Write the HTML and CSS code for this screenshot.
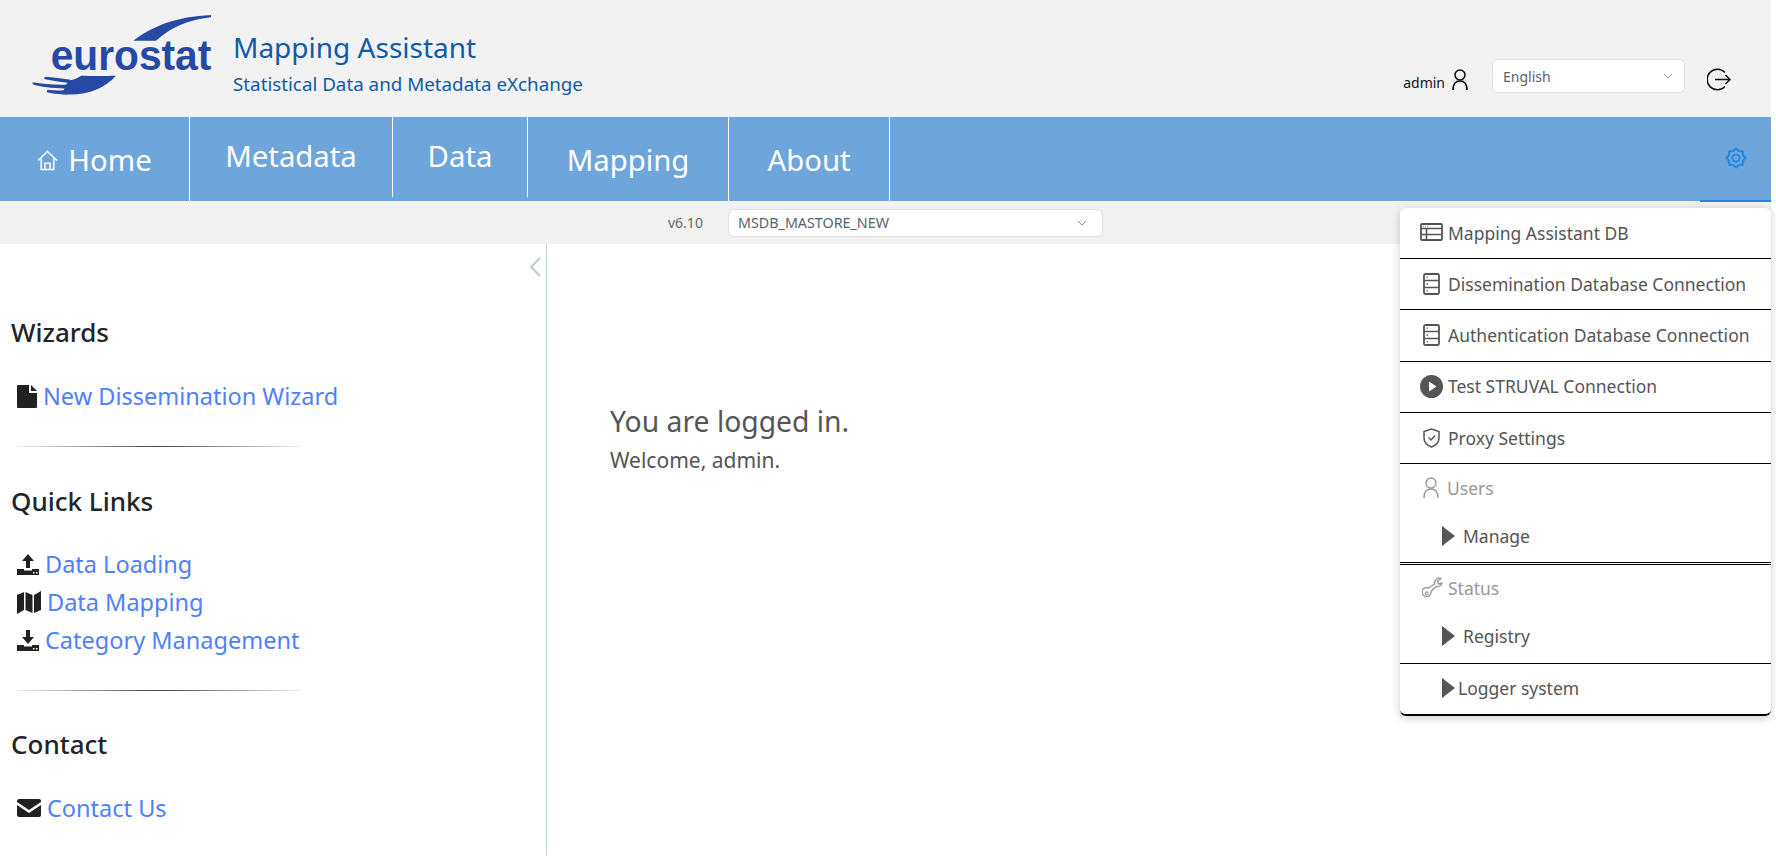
FILE: index.html
```html
<!DOCTYPE html>
<html lang="en">
<head>
<meta charset="utf-8">
<title>Mapping Assistant</title>
<link rel="stylesheet" href="styles.css">
</head>
<body>
<div class="page">
  <header class="header">
    <div class="brand">
      <svg class="logo" viewBox="0 0 630 300" width="210" height="100" aria-label="eurostat">
        <path class="logo-shape" d="M340 107C400 62 470 35 573 30L573 37C500 45 450 70 408 107Z"/>
        <text class="logo-text" x="92" y="195" textLength="482" lengthAdjust="spacingAndGlyphs">eurostat</text>
        <path class="logo-shape" d="M288 212C255 213 215 213 183 212C172 220 160 226 145 226L125 268C205 274 255 248 288 212Z"/>
        <path class="logo-shape" d="M75 215C100 216 125 220 150 224L150 234C125 232 100 228 72 222Z"/>
        <path class="logo-shape" d="M38 232C70 238 110 241 150 239L150 250C110 252 65 247 38 238Z"/>
        <path class="logo-shape" d="M82 254C105 257 130 257 150 254L150 266C130 269 105 268 80 262Z"/>
      </svg>
      <div class="titles">
        <div class="app-title">Mapping Assistant</div>
        <div class="app-subtitle">Statistical Data and Metadata eXchange</div>
      </div>
    </div>
    <div class="user-tools">
      <span class="user-name">admin</span>
      <svg class="user-icon" viewBox="0 0 16 21" width="16" height="21"><circle cx="8" cy="6" r="5" fill="none" stroke="#111" stroke-width="1.6"/><path d="M1 21C1 15 4 12 8 12S15 15 15 21" fill="none" stroke="#111" stroke-width="1.6"/></svg>
      <div class="select select-lang"><span>English</span><svg class="chev" viewBox="0 0 10 6" width="10" height="6"><path d="M1 1L5 5L9 1" fill="none" stroke="#8a9099" stroke-width="1"/></svg></div>
      <svg class="logout-icon" viewBox="0 0 24 23" width="24" height="23"><path d="M18 4.500A10.300 10.300 0 1 0 18 18.500" fill="none" stroke="#111" stroke-width="1.500"/><path d="M8 11.500H23M18.500 7L23 11.500L18.500 16" fill="none" stroke="#111" stroke-width="1.500"/></svg>
    </div>
  </header>

  <nav class="nav">
    <a class="nav-item nav-home"><svg class="home-icon" viewBox="0 0 20 20" width="21" height="21"><path d="M1 10L10 1.500L19 10M4 8V18.500H16V8M7.500 18.500V12.500H12.500V18.500" fill="none" stroke="#fff" stroke-width="1.400"/></svg><span>Home</span></a>
    <a class="nav-item nav-metadata nav-short">Metadata</a>
    <a class="nav-item nav-data nav-short">Data</a>
    <a class="nav-item nav-mapping">Mapping</a>
    <a class="nav-item nav-about">About</a>
    <a class="nav-settings"><svg viewBox="0 0 24 24" width="24" height="24"><path d="M21.500 12L18.930 14.870L18.720 18.720L14.870 18.930L12 21.500L9.130 18.930L5.280 18.720L5.070 14.870L2.500 12L5.070 9.130L5.280 5.280L9.130 5.070L12 2.500L14.870 5.070L18.720 5.280L18.930 9.130Z" fill="none" stroke="#1e88e5" stroke-width="1.900" stroke-linejoin="round"/><circle cx="12" cy="12" r="3.600" fill="none" stroke="#1e88e5" stroke-width="1.900"/></svg></a>
  </nav>

  <div class="subbar">
    <span class="version">v6.10</span>
    <div class="select select-db"><span>MSDB_MASTORE_NEW</span><svg class="chev" viewBox="0 0 10 6" width="10" height="6"><path d="M1 1L5 5L9 1" fill="none" stroke="#8a9099" stroke-width="1"/></svg></div>
  </div>

  <div class="content">
    <aside class="sidebar">
      <svg class="collapse" viewBox="0 0 12 20" width="12" height="20"><path d="M11 1L2 10L11 19" fill="none" stroke="#bccbd5" stroke-width="1.900"/></svg>
      <h3 class="side-title side-title-first">Wizards</h3>
      <ul class="side-links">
        <li><svg class="side-icon" viewBox="0 0 20 23" width="20" height="23"><path d="M1 0H12V8H20V22A1 1 0 0 1 19 23H1A1 1 0 0 1 0 22V1A1 1 0 0 1 1 0Z"/><path d="M14 0L20 6H14Z"/></svg><a>New Dissemination Wizard</a></li>
      </ul>
      <div class="side-rule"></div>
      <h3 class="side-title">Quick Links</h3>
      <ul class="side-links side-links-tight">
        <li><svg class="side-icon" viewBox="0 0 22 21" width="22" height="21"><path d="M11 0L17 7H13V14H9V7H5Z"/><path d="M0 15H7V16.500H15V15H22V21H0ZM16 18V19.500H17.500V18ZM19 18V19.500H20.500V18Z" fill-rule="evenodd"/></svg><a>Data Loading</a></li>
        <li><svg class="side-icon" viewBox="0 0 24 23" width="24" height="23"><path d="M0 4L7 1V19L0 23ZM8.500 1L15.500 4V22L8.500 19ZM17 4L24 0V19L17 22Z"/></svg><a>Data Mapping</a></li>
        <li><svg class="side-icon" viewBox="0 0 22 21" width="22" height="21"><path d="M9 0H13V7H17L11 14L5 7H9Z"/><path d="M0 15H7V16.500H15V15H22V21H0ZM16 18V19.500H17.500V18ZM19 18V19.500H20.500V18Z" fill-rule="evenodd"/></svg><a>Category Management</a></li>
      </ul>
      <div class="side-rule"></div>
      <h3 class="side-title side-title-last">Contact</h3>
      <ul class="side-links">
        <li><svg class="side-icon" viewBox="0 0 24 18" width="24" height="18"><path d="M2 0H22A2 2 0 0 1 24 2V3L12 11L0 3V2A2 2 0 0 1 2 0Z"/><path d="M0 6L12 14L24 6V16A2 2 0 0 1 22 18H2A2 2 0 0 1 0 16Z"/></svg><a>Contact Us</a></li>
      </ul>
    </aside>
    <main class="main">
      <div class="logged">You are logged in.</div>
      <div class="welcome">Welcome, admin.</div>
    </main>
  </div>

  <div class="menu">
    <div class="menu-row">
      <svg class="menu-icon icon-up" viewBox="0 0 23 18" width="23" height="18"><rect x="1" y="1" width="21" height="16" rx="1" fill="none" stroke="#555" stroke-width="1.800"/><path d="M1 5.500H22M1 11.500H22M6.500 5.500V17" fill="none" stroke="#555" stroke-width="1.500"/><path d="M3 3.200H8" stroke="#888" stroke-width="1" stroke-dasharray="1 1"/></svg>
      <span>Mapping Assistant DB</span>
    </div>
    <div class="menu-row">
      <svg class="menu-icon server" viewBox="0 0 17 22" width="17" height="22"><rect x="1" y="1" width="15" height="20" rx="1.500" fill="none" stroke="#555" stroke-width="1.800"/><path d="M1 7.500H16M1 14.500H16" stroke="#555" stroke-width="1.600"/><path d="M3.500 4.200H5M3.500 11H5M3.500 17.800H5" stroke="#555" stroke-width="1.300"/></svg>
      <span>Dissemination Database Connection</span>
    </div>
    <div class="menu-row menu-row-tall">
      <svg class="menu-icon server" viewBox="0 0 17 22" width="17" height="22"><rect x="1" y="1" width="15" height="20" rx="1.500" fill="none" stroke="#555" stroke-width="1.800"/><path d="M1 7.500H16M1 14.500H16" stroke="#555" stroke-width="1.600"/><path d="M3.500 4.200H5M3.500 11H5M3.500 17.800H5" stroke="#555" stroke-width="1.300"/></svg>
      <span>Authentication Database Connection</span>
    </div>
    <div class="menu-row menu-row-lift">
      <svg class="menu-icon" viewBox="0 0 23 23" width="23" height="23"><circle cx="11.500" cy="11.500" r="11.500" fill="#555"/><path d="M9 6.500L16.500 11.500L9 16.500Z" fill="#fff"/></svg>
      <span>Test STRUVAL Connection</span>
    </div>
    <div class="menu-row">
      <svg class="menu-icon server" viewBox="0 0 17 20" width="17" height="20"><path d="M8.500 1L16 3.500V10C16 14.500 12.500 17.500 8.500 19C4.500 17.500 1 14.500 1 10V3.500Z" fill="none" stroke="#555" stroke-width="1.500"/><path d="M5.500 9.500L8 12L12 7.500" fill="none" stroke="#555" stroke-width="1.300"/></svg>
      <span>Proxy Settings</span>
    </div>
    <div class="menu-group">
      <div class="menu-head">
        <svg class="menu-icon server" viewBox="0 0 16 21" width="16" height="21"><circle cx="8" cy="6" r="5" fill="none" stroke="#999" stroke-width="1.400"/><path d="M1 21C1 15 4 12 8 12S15 15 15 21" fill="none" stroke="#999" stroke-width="1.400"/></svg>
        <span>Users</span>
      </div>
      <div class="menu-sub">
        <svg class="caret" viewBox="0 0 13 20" width="13" height="20"><path d="M0 0L13 10L0 20Z" fill="#555"/></svg>
        <span>Manage</span>
      </div>
    </div>
    <div class="menu-group menu-group-status">
      <div class="menu-head">
        <svg class="menu-icon wrench" viewBox="0 0 21 21" width="21" height="21"><path d="M12.500 7A5 5 0 0 1 19 1.500L15.500 4.500L16.500 7L20 6A5 5 0 0 1 14 9.500L9 14.500A4.500 4.500 0 1 1 6.500 11L12.500 7Z" fill="none" stroke="#999" stroke-width="1.400" stroke-linejoin="round"/><circle cx="4.700" cy="16.300" r="1.400" fill="none" stroke="#999" stroke-width="1.100"/></svg>
        <span>Status</span>
      </div>
      <div class="menu-sub">
        <svg class="caret" viewBox="0 0 13 20" width="13" height="20"><path d="M0 0L13 10L0 20Z" fill="#555"/></svg>
        <span>Registry</span>
      </div>
    </div>
    <div class="menu-sub menu-last">
      <svg class="caret caret-tight" viewBox="0 0 13 20" width="13" height="20"><path d="M0 0L13 10L0 20Z" fill="#555"/></svg>
      <span>Logger system</span>
    </div>
  </div>
</div>
</body>
</html>
```
FILE: styles.css
```css
* { box-sizing: border-box; }
html, body { margin: 0; padding: 0; background: #fff; }
body { font-family: "Noto Sans", "Open Sans", sans-serif; color: #212529; }
.page { position: relative; width: 1771px; height: 859px; display: flex; flex-direction: column; }

.header { height: 117px; background: #f2f2f2; display: flex; justify-content: space-between; }
.brand { display: flex; }
.logo { margin: 5px 0 0 20px; flex: none; }
.logo-shape { fill: #2549a5; }
.logo-text { fill: #2549a5; font-family: "Liberation Sans", sans-serif; font-weight: 700; font-size: 125px; }
.titles { margin-left: 3px; padding-top: 27px; }
.app-title { font-size: 28px; line-height: 40px; color: #0f5ba7; }
.app-subtitle { font-size: 18.800px; line-height: 34px; margin-top: 0; color: #0f5ba7; }

.user-tools { display: flex; align-items: flex-end; padding: 0 40px 24px 0; }
.user-name { font-size: 14px; line-height: 20px; color: #111; }
.user-icon { margin: 0 24px 3px 7px; }
.select { display: flex; align-items: center; justify-content: space-between; background: #fff; border: 1px solid #dcdfe3; border-radius: 6px; font-size: 14px; color: #5a6270; }
.select-lang { width: 193px; height: 34px; padding: 0 11px 0 10px; }
.logout-icon { margin: 0 0 2px 22px; }

.nav { height: 84px; background: #6ea6dc; display: flex; position: relative; }
.nav-item { display: flex; align-items: center; justify-content: center; font-size: 29.300px; color: #fff; border-right: 1px solid #fff; }
.nav-home { width: 190px; gap: 10px; padding-top: 1px; }
.nav-metadata { width: 203px; }
.nav-data { width: 135px; }
.nav-mapping { width: 201px; padding-top: 2px; }
.nav-about { width: 161px; padding-top: 2px; }
.nav-short { height: 80px; padding-top: 0; padding-bottom: 2px; }
.home-icon { margin-top: 2px; }
.nav-settings { margin-left: auto; width: 71px; height: 85px; border-bottom: 2px solid #1e88e5; display: flex; align-items: center; justify-content: center; padding-bottom: 2px; }

.subbar { height: 43px; background: #f2f2f2; display: flex; align-items: center; padding-left: 668px; }
.version { width: 60px; font-size: 14px; color: #666; }
.select-db { width: 375px; height: 28px; padding: 0 15px 0 9px; font-size: 14.300px; }

.content { flex: 1; display: flex; }
.sidebar { position: relative; width: 547px; height: 611px; border-right: 1px solid #b7d3e2; }
.collapse { position: absolute; top: 13px; left: 529px; }
.side-title { margin: 36px 0 0 11px; font-size: 26px; line-height: 36px; font-weight: 500; color: #212529; }
.side-title-first { margin-top: 70px; }
.side-title-last { margin-top: 35px; }
.side-links { list-style: none; margin: 27px 0 0; padding: 0 0 0 17px; }
.side-links-tight { margin-top: 26px; }
.side-links li { display: flex; align-items: center; height: 38px; font-size: 23.500px; }
.side-links a { color: #5080ff; margin-left: 6px; }
.side-icon { fill: #212121; flex: none; }
.side-rule { height: 1px; width: 283px; margin: 31px 0 0 17px; background: linear-gradient(to right, #eee, #444 50%, #eee); }

.main { flex: 1; padding: 155px 0 0 63px; color: #555; }
.logged { font-size: 28.300px; line-height: 44px; }
.welcome { font-size: 21px; line-height: 30px; margin-top: 2px; }

.menu { position: absolute; left: 1400px; top: 208px; width: 371px; background: #fff; border-radius: 6px; box-shadow: 0 2px 10px rgba(0,0,0,.2); font-size: 17.500px; color: #555; }
.menu-row { height: 51px; display: flex; align-items: center; border-bottom: 1px solid #000; padding: 0 0 1px 20px; }
.menu-row-tall { height: 52px; padding-bottom: 2px; }
.menu-row-lift { padding-bottom: 2px; }
.menu-icon { flex: none; margin-right: 5px; }
.menu-icon.server { margin: 0 8px 0 3px; }
.menu-icon.wrench { margin-left: 2px; margin-right: 5px; }
.icon-up { margin-top: -2px; }
.menu-group { border-bottom: 1px solid #000; }
.menu-head { height: 48px; display: flex; align-items: center; padding: 0 0 1px 20px; color: #999; }
.menu-sub { height: 50px; display: flex; align-items: center; padding: 0 0 2px 42px; }
.menu-group:nth-of-type(6) { height: 101px; padding-bottom: 1px; }
.menu-group:nth-of-type(6) .menu-sub { border-bottom: 1px solid #000; height: 51px; }
.menu-group-status { height: 99px; }
.menu-group-status .menu-head { padding-bottom: 3px; }
.menu-group-status .menu-sub { padding-bottom: 4px; }
.caret { flex: none; margin-right: 8px; }
.caret-tight { margin-right: 3px; }
.menu-last { height: 52px; border-bottom: 2px solid #000; border-radius: 0 0 6px 6px; padding-bottom: 3px; }
```
